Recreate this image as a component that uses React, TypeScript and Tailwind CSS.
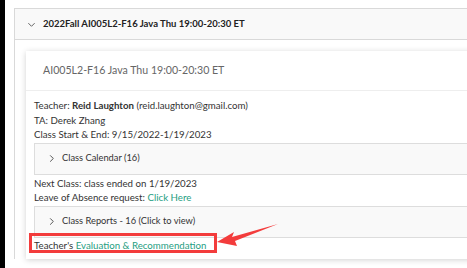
import React from "react";

const Chevron = ({ dir }: { dir: "down" | "right" }) => (
  <svg width="9" height="9" viewBox="0 0 10 10" className="shrink-0">
    {dir === "down" ? (
      <path d="M1.5 3.5 L5 7 L8.5 3.5" fill="none" stroke="#555" strokeWidth="1" />
    ) : (
      <path d="M3.5 1.5 L7 5 L3.5 8.5" fill="none" stroke="#444" strokeWidth="1" />
    )}
  </svg>
);

export default function App() {
  return (
    <div
      className="relative flex h-[268px] w-[467px] overflow-hidden bg-white text-[#333]"
      style={{ fontFamily: 'Lato, "Open Sans", Arial, sans-serif' }}
    >
      <div className="w-[5px] shrink-0 bg-black" />
      <div className="flex-1 pl-[9px] pt-[8px]">
        <div className="w-[600px] border-l border-t border-[#d9d9d9]">
          <div className="flex h-[31px] items-center gap-[7px] border-b border-[#d9d9d9] bg-[#f9f9f9] pl-[12px] text-[9.5px] font-bold text-[#222]">
            <Chevron dir="down" />
            <span>2022Fall AI005L2-F16 Java Thu 19:00-20:30 ET</span>
          </div>
          <div className="pl-[11px] pt-[11px]">
            <div className="w-[600px] bg-white shadow-[0_1px_6px_rgba(0,0,0,0.18)]">
              <div className="flex h-[40px] items-center border-b border-[#eee] pl-[17px] text-[10.6px] text-[#666]">
                AI005L2-F16 Java Thu 19:00-20:30 ET
              </div>
              <div className="pb-[7px] pl-[8px] pt-[7px] text-[9.7px] leading-[14.5px]">
                <div>
                  Teacher: <span className="font-bold">Reid Laughton</span> (reid.laughton@gmail.com)
                </div>
                <div>TA: Derek Zhang</div>
                <div>Class Start &amp; End: 9/15/2022-1/19/2023</div>
                <div className="my-[1px] flex h-[32px] items-center gap-[6px] border border-[#ddd] bg-[#f9f9f9] pl-[12px] text-[9.3px]">
                  <Chevron dir="right" />
                  <span>Class Calendar (16)</span>
                </div>
                <div>Next Class: class ended on 1/19/2023</div>
                <div>
                  Leave of Absence request: <span className="text-[#1f9e82]">Click Here</span>
                </div>
                <div className="mt-[1px] flex h-[32px] items-center gap-[6px] border border-[#ddd] bg-[#f9f9f9] pl-[12px] text-[9.3px]">
                  <Chevron dir="right" />
                  <span>Class Reports - 16 (Click to view)</span>
                </div>
                <div className="leading-[14px]">
                  Teacher's <span className="text-[#1f9e82]">Evaluation &amp; Recommendation</span>
                </div>
              </div>
            </div>
          </div>
        </div>
      </div>
      <div className="absolute left-[29px] top-[233px] h-[20px] w-[188px] border-[3px] border-[#f33c3c]" />
      <svg className="absolute left-[214px] top-[218px]" width="66" height="34" viewBox="0 0 66 34">
        <polygon points="3,24 20,14 18,19 64,6 21,23 23,28" fill="#f33c3c" />
      </svg>
    </div>
  );
}
